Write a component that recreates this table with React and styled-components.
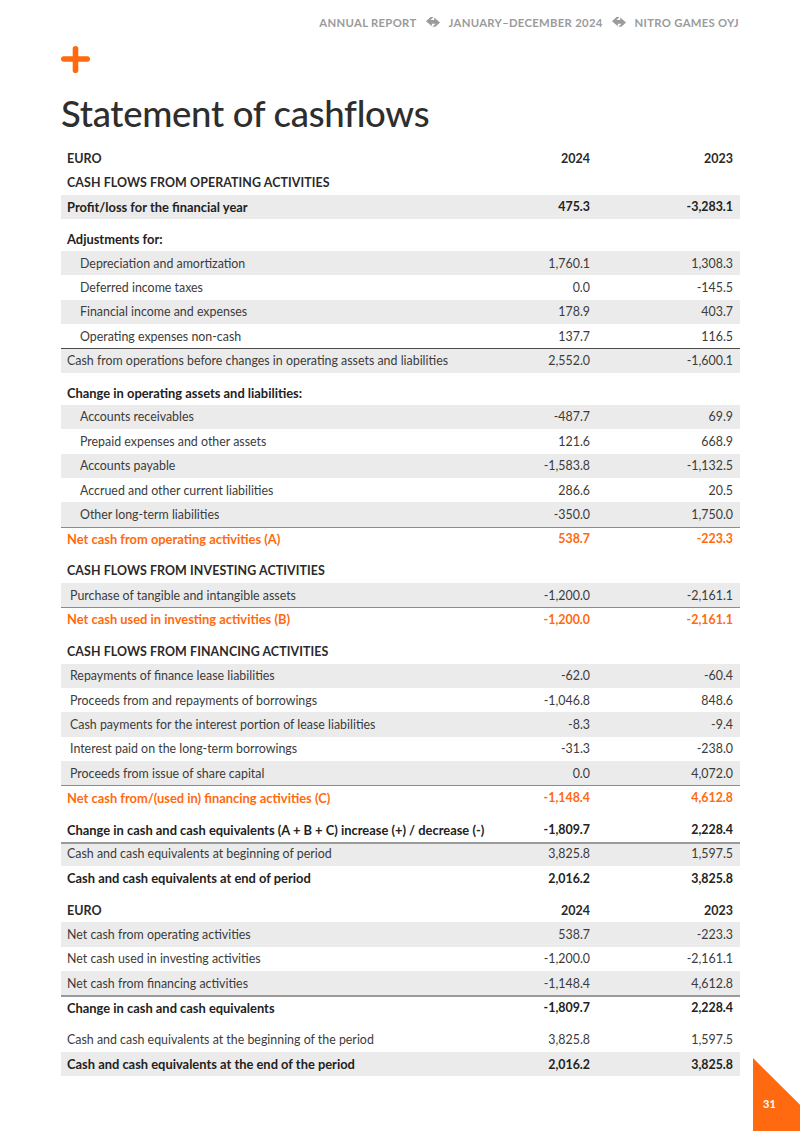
import React from "react";
import styled, { createGlobalStyle } from "styled-components";

const ORANGE = "#ff6a10";

const GlobalStyle = createGlobalStyle`
  body {
    margin: 0;
    background: #fff;
    font-family: Lato, "Open Sans", sans-serif;
  }
`;

const rows = [
  { kind: "head", label: "EURO", v: ["2024", "2023"] },
  { kind: "section", label: "CASH FLOWS FROM OPERATING ACTIVITIES" },
  { label: "Profit/loss for the financial year", v: ["475.3", "-3,283.1"], bold: true, shade: true },
  { label: "Adjustments for:", bold: true, gap: true },
  { label: "Depreciation and amortization", v: ["1,760.1", "1,308.3"], indent: 13, shade: true },
  { label: "Deferred income taxes", v: ["0.0", "-145.5"], indent: 13 },
  { label: "Financial income and expenses", v: ["178.9", "403.7"], indent: 13, shade: true },
  { label: "Operating expenses non-cash", v: ["137.7", "116.5"], indent: 13 },
  { label: "Cash from operations before changes in operating assets and liabilities", v: ["2,552.0", "-1,600.1"], shade: true, line: "dark" },
  { label: "Change in operating assets and liabilities:", bold: true, gap: true },
  { label: "Accounts receivables", v: ["-487.7", "69.9"], indent: 13, shade: true },
  { label: "Prepaid expenses and other assets", v: ["121.6", "668.9"], indent: 13 },
  { label: "Accounts payable", v: ["-1,583.8", "-1,132.5"], indent: 13, shade: true },
  { label: "Accrued and other current liabilities", v: ["286.6", "20.5"], indent: 13 },
  { label: "Other long-term liabilities", v: ["-350.0", "1,750.0"], indent: 13, shade: true },
  { label: "Net cash from operating activities (A)", v: ["538.7", "-223.3"], bold: true, orange: true, line: "orange" },
  { kind: "section", label: "CASH FLOWS FROM INVESTING ACTIVITIES", gap: true },
  { label: "Purchase of tangible and intangible assets", v: ["-1,200.0", "-2,161.1"], indent: 3, shade: true },
  { label: "Net cash used in investing activities (B)", v: ["-1,200.0", "-2,161.1"], bold: true, orange: true, line: "orange" },
  { kind: "section", label: "CASH FLOWS FROM FINANCING ACTIVITIES", gap: true },
  { label: "Repayments of finance lease liabilities", v: ["-62.0", "-60.4"], indent: 3, shade: true },
  { label: "Proceeds from and repayments of borrowings", v: ["-1,046.8", "848.6"], indent: 3 },
  { label: "Cash payments for the interest portion of lease liabilities", v: ["-8.3", "-9.4"], indent: 3, shade: true },
  { label: "Interest paid on the long-term borrowings", v: ["-31.3", "-238.0"], indent: 3 },
  { label: "Proceeds from issue of share capital", v: ["0.0", "4,072.0"], indent: 3, shade: true },
  { label: "Net cash from/(used in) financing activities (C)", v: ["-1,148.4", "4,612.8"], bold: true, orange: true, line: "orange" },
  { label: "Change in cash and cash equivalents (A + B + C) increase (+) / decrease (-)", v: ["-1,809.7", "2,228.4"], bold: true, gap: true },
  { label: "Cash and cash equivalents at beginning of period", v: ["3,825.8", "1,597.5"], shade: true, line: "gray" },
  { label: "Cash and cash equivalents at end of period", v: ["2,016.2", "3,825.8"], bold: true },
  { kind: "head", label: "EURO", v: ["2024", "2023"], gap: true },
  { label: "Net cash from operating activities", v: ["538.7", "-223.3"], shade: true },
  { label: "Net cash used in investing activities", v: ["-1,200.0", "-2,161.1"] },
  { label: "Net cash from financing activities", v: ["-1,148.4", "4,612.8"], shade: true },
  { label: "Change in cash and cash equivalents", v: ["-1,809.7", "2,228.4"], bold: true, line: "gray" },
  { label: "Cash and cash equivalents at the beginning of the period", v: ["3,825.8", "1,597.5"], gap: true },
  { label: "Cash and cash equivalents at the end of the period", v: ["2,016.2", "3,825.8"], bold: true, shade: true },
];

export default function App() {
  return (
    <>
      <GlobalStyle />
      <Page>
        <TopBar>
          <span>ANNUAL REPORT</span>
          <Separator />
          <span>JANUARY–DECEMBER 2024</span>
          <Separator />
          <span>NITRO GAMES OYJ</span>
        </TopBar>
        <PlusMark viewBox="0 0 29 27" width="29" height="27">
          <line x1="2.8" y1="13" x2="26.2" y2="13" />
          <line x1="14.5" y1="2.8" x2="14.5" y2="24.2" />
        </PlusMark>
        <Title>Statement of cashflows</Title>
        <Table>
          {rows.map((r, i) => {
            if (r.kind === "section") {
              return (
                <Row key={i} $gap={r.gap}>
                  <SectionLabel>{r.label}</SectionLabel>
                </Row>
              );
            }
            if (r.kind === "head") {
              return (
                <Row key={i} $gap={r.gap}>
                  <HeadCell>{r.label}</HeadCell>
                  <HeadCell $num>{r.v[0]}</HeadCell>
                  <HeadCell $num $last>{r.v[1]}</HeadCell>
                </Row>
              );
            }
            return (
              <Row key={i} $gap={r.gap} $shade={r.shade} $line={r.line}>
                <Label $bold={r.bold} $orange={r.orange} $indent={r.indent || 0}>
                  {r.label}
                </Label>
                {r.v && (
                  <>
                    <Num $bold={r.bold} $orange={r.orange}>{r.v[0]}</Num>
                    <Num $bold={r.bold} $orange={r.orange} $last>{r.v[1]}</Num>
                  </>
                )}
              </Row>
            );
          })}
        </Table>
        <PageCorner>
          <span>31</span>
        </PageCorner>
      </Page>
    </>
  );
}

function Separator() {
  return (
    <SepIcon viewBox="0 0 14 10" width="14" height="10">
      <path d="M0 4.2 L4.6 0 L7.6 0 L4.4 3 L8.2 3 L8.2 0.6 L14 5.6 L9.4 9.8 L6.4 9.8 L9.6 6.8 L5.8 6.8 L5.8 9.2 Z" />
    </SepIcon>
  );
}

const lineColor = {
  dark: "#4a4a4a",
  gray: "#9a9a9a",
  orange: ORANGE,
};

const textColor = (p) => (p.$orange ? ORANGE : p.$bold ? "#222" : "#3b3b3b");

const Page = styled.div`
  position: relative;
  width: 800px;
  min-height: 1131px;
  box-sizing: border-box;
  padding: 15px 60px 0 61px;
  background: #fff;
  overflow: hidden;
`;

const TopBar = styled.div`
  display: flex;
  justify-content: flex-end;
  align-items: center;
  gap: 9px;
  height: 14px;
  padding-right: 1px;
  font-size: 11.3px;
  font-weight: 700;
  letter-spacing: 0.3px;
  color: #9b9b9b;
`;

const SepIcon = styled.svg`
  display: block;
  fill: #9b9b9b;
`;

const PlusMark = styled.svg`
  display: block;
  margin-top: 17px;
  stroke: ${ORANGE};
  stroke-width: 5.6;
  stroke-linecap: round;
`;

const Title = styled.h1`
  margin: 18px 0 0;
  font-size: 36.5px;
  line-height: 44px;
  font-weight: 500;
  letter-spacing: -0.3px;
  color: #2e2e2e;
`;

const Table = styled.div`
  display: flex;
  flex-direction: column;
  margin-top: 11px;
  width: 679px;
`;

const Row = styled.div`
  display: grid;
  grid-template-columns: 437px 100px 142px;
  align-items: center;
  height: 24.35px;
  margin-top: ${(p) => (p.$gap ? "7.7px" : "0")};
  background: ${(p) => (p.$shade ? "#ebebeb" : "transparent")};
  box-shadow: ${(p) =>
    p.$line
      ? `inset 0 ${p.$line === "gray" ? 2 : 1}px 0 ${lineColor[p.$line]}`
      : "none"};
`;

const HeadCell = styled.div`
  font-size: 12.5px;
  font-weight: 700;
  color: #2a2a2a;
  text-align: ${(p) => (p.$num ? "right" : "left")};
  padding: ${(p) => (p.$num ? `0 ${p.$last ? 7 : 8}px 0 0` : "0 0 0 6px")};
`;

const SectionLabel = styled.div`
  grid-column: 1 / 4;
  padding-left: 6px;
  font-size: 12.4px;
  font-weight: 700;
  color: #2a2a2a;
  letter-spacing: 0.1px;
`;

const Label = styled.div`
  padding-left: ${(p) => 6 + p.$indent}px;
  font-size: ${(p) => (p.$bold ? 12.9 : 12.4)}px;
  font-weight: ${(p) => (p.$bold ? 700 : 400)};
  color: ${textColor};
  white-space: nowrap;
`;

const Num = styled.div`
  text-align: right;
  padding-right: ${(p) => (p.$last ? 7 : 8)}px;
  font-size: 12.4px;
  font-weight: ${(p) => (p.$bold ? 700 : 400)};
  color: ${textColor};
`;

const PageCorner = styled.div`
  position: absolute;
  right: 0;
  bottom: 0;
  width: 47px;
  height: 73px;
  background: ${ORANGE};
  clip-path: polygon(0 0, 100% 64%, 100% 100%, 0 100%);
  display: flex;
  align-items: flex-end;
  padding: 0 0 21px 10px;
  box-sizing: border-box;
  span {
    font-size: 11px;
    font-weight: 700;
    color: #fff;
  }
`;
